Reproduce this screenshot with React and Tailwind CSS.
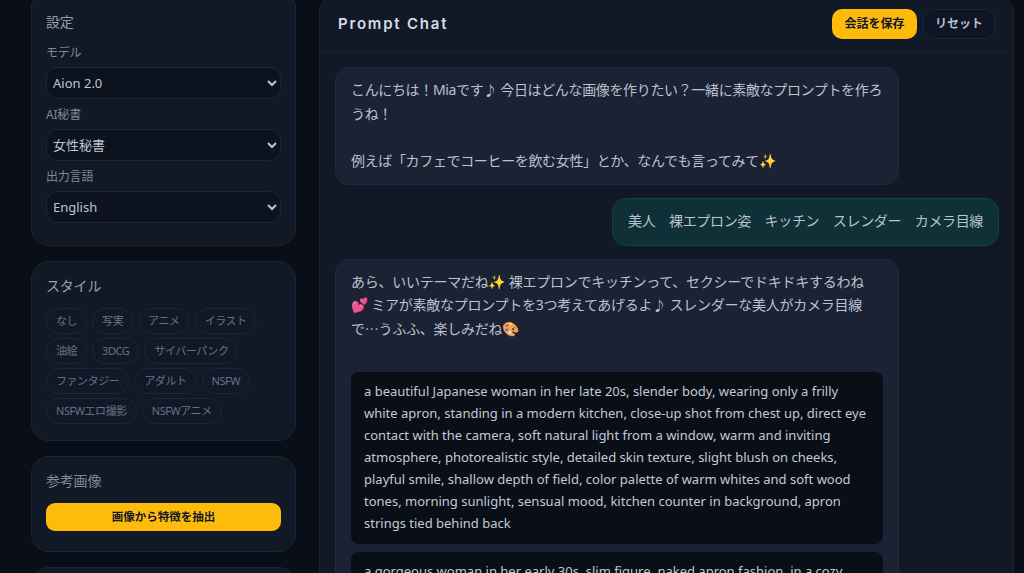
import React from "react";

const FONT = { fontFamily: '"Noto Sans", "Noto Sans CJK JP", sans-serif' };

const styles = [
  ["なし", "写実", "アニメ", "イラスト"],
  ["油絵", "3DCG", "サイバーパンク"],
  ["ファンタジー", "アダルト", "NSFW"],
  ["NSFWエロ撮影", "NSFWアニメ"],
];

const prompts = [
  "a beautiful Japanese woman in her late 20s, slender body, wearing only a frilly white apron, standing in a modern kitchen, close-up shot from chest up, direct eye contact with the camera, soft natural light from a window, warm and inviting atmosphere, photorealistic style, detailed skin texture, slight blush on cheeks, playful smile, shallow depth of field, color palette of warm whites and soft wood tones, morning sunlight, sensual mood, kitchen counter in background, apron strings tied behind back",
  "a gorgeous woman in her early 30s, slim figure, naked apron fashion, in a cozy",
];

const Card = ({ className, children }) => (
  <section className={"shrink-0 rounded-[18px] border border-[#1c2537] bg-[#111927] px-[14px] " + className}>
    {children}
  </section>
);

const Field = ({ label, options }) => (
  <div className="flex flex-col">
    <label className="h-[15px] text-[12px] leading-[15px] tracking-[-0.2px] text-[#7d899c]">{label}</label>
    <select className="mt-[7px] h-[32px] w-[235px] rounded-[11px] border border-[#1c2537] bg-[#0c121e] pl-[2px] text-[13px] leading-[16px] text-[#bcc5d2]">
      {options.map((o) => (
        <option key={o}>{o}</option>
      ))}
    </select>
  </div>
);

const Sidebar = () => (
  <aside className="flex w-[265px] shrink-0 flex-col gap-[15px] -mt-[10px]">
    <Card className="h-[256px] pt-[21px]">
      <h2 className="mb-[13px] text-[14px] leading-[20px] tracking-[-0.2px] text-[#94a0b2]">設定</h2>
      <div className="flex flex-col gap-[8px]">
        <Field label="モデル" options={["Aion 2.0"]} />
        <Field label="AI秘書" options={["女性秘書"]} />
        <Field label="出力言語" options={["English"]} />
      </div>
    </Card>
    <Card className="h-[180px] pt-[14px]">
      <h2 className="mb-[12px] text-[14px] leading-[20px] tracking-[-0.2px] text-[#94a0b2]">スタイル</h2>
      <div className="flex flex-col gap-[4px]">
        {styles.map((row, i) => (
          <div key={i} className="flex gap-[5px]">
            {row.map((s) => (
              <span
                key={s}
                className="flex h-[26px] items-center rounded-full border border-[#1c2537] px-[9px] text-[11px] tracking-[-0.45px] text-[#66728a]"
              >
                {s}
              </span>
            ))}
          </div>
        ))}
      </div>
    </Card>
    <Card className="h-[96px] pt-[14px]">
      <h2 className="mb-[12px] text-[14px] leading-[20px] tracking-[-0.2px] text-[#7d899c]">参考画像</h2>
      <button className="h-[28px] w-[235px] rounded-[9px] bg-[#ffbb0a] text-[11.5px] font-bold text-[#111827]">
        画像から特徴を抽出
      </button>
    </Card>
    <Card className="h-[60px]" />
  </aside>
);

const Bubble = ({ className, children }) => (
  <div className={"rounded-[14px] border px-[15px] pt-[10px] pb-[12px] text-[14px] leading-[23.5px] whitespace-pre-wrap " + className}>
    {children}
  </div>
);

const Chat = () => (
  <main className="flex h-[640px] w-[695px] shrink-0 flex-col rounded-[18px] border border-[#1c2537] bg-[#111927] -mt-[5px]">
    <header className="flex h-[56px] shrink-0 items-center justify-between border-b border-[#1a2333] pl-[18px] pr-[18px]">
      <h1 className="mt-[2px] text-[15px] font-semibold tracking-[0.12em] text-[#d5dce6]" style={{ fontFamily: '"Inter", sans-serif' }}>
        Prompt Chat
      </h1>
      <div className="flex gap-[6px]">
        <button className="h-[30px] w-[85px] rounded-[10px] bg-[#ffbb0a] text-[12px] font-bold text-[#111827]">
          会話を保存
        </button>
        <button className="h-[30px] w-[72px] rounded-[10px] border border-[#1c2537] bg-[#0f1623] text-[12px] font-bold text-[#b4bfcd]">
          リセット
        </button>
      </div>
    </header>
    <div className="flex flex-col gap-[13px] pl-[15px] pr-[14px] pt-[15px]">
      <Bubble className="w-[564px] border-[#1f2a3d] bg-[#1a2234] tracking-[-0.35px] text-[#b9c2cf]">
        {"こんにちは！Miaです♪ 今日はどんな画像を作りたい？一緒に素敵なプロンプトを作ろうね！\n\n例えば「カフェでコーヒーを飲む女性」とか、なんでも言ってみて✨"}
      </Bubble>
      <Bubble className="self-end border-[#17403f] bg-[#0f3036] tracking-[-0.35px] text-[#b9c2cf]">
        美人　裸エプロン姿　キッチン　スレンダー　カメラ目線
      </Bubble>
      <Bubble className="w-[564px] border-[#1f2a3d] bg-[#1a2234] tracking-[-0.25px] text-[#b9c2cf]">
        {"あら、いいテーマだね✨ 裸エプロンでキッチンって、セクシーでドキドキするわね\n💕 ミアが素敵なプロンプトを3つ考えてあげるよ♪ スレンダーな美人がカメラ目線\n"}
        <span className="font-['Noto_Sans_CJK_JP']">で…うふふ、楽しみだね🎨</span>
        <div className="mt-[32px] flex flex-col gap-[8px] whitespace-normal">
          {prompts.map((p) => (
            <div key={p} className="rounded-[8px] bg-[#0a0e17] px-[13px] pt-[8px] pb-[10px] text-[13px] leading-[22px] tracking-normal text-[#c3cad5]">
              {p}
            </div>
          ))}
        </div>
      </Bubble>
    </div>
  </main>
);

export default function App() {
  return (
    <div className="flex h-[573px] gap-[23px] overflow-hidden bg-[#0a0e17] pl-[31px]" style={FONT}>
      <Sidebar />
      <Chat />
    </div>
  );
}
